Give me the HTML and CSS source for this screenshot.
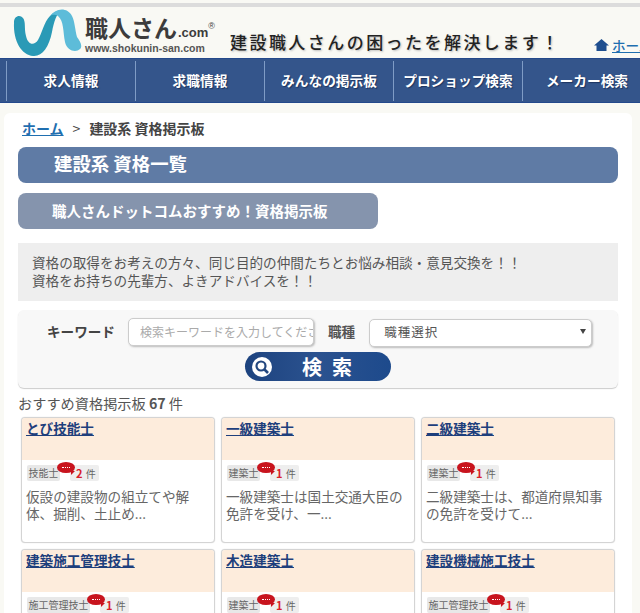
FILE: index.html
```html
<!DOCTYPE html>
<html lang="ja">
<head>
  <meta charset="UTF-8">
  <title>建設系 資格掲示板</title>
  <link rel="stylesheet" href="styles.css">
</head>
<body>
  <div class="top-line"></div>
  <header class="header">
    <svg class="logo-mark" width="70" height="50" viewBox="13 8 70 50">
      <path fill="#2a9ab6" d="M14 22C14 16 20 14 23 18C26 22 24 28 26 36C28 45 34 46 38 40C42 33 44 22 50 16C53 13 58 10 62 10C56 14 54 22 52 32C49 47 42 57 33 56C22 55 13 42 14 22Z"/>
      <path fill="#5dbcd9" d="M50 16C56 8 67 7 72 16C75 22 75 30 77 37C80 41 83 46 80 49C76 53 67 51 65 42C63 32 64 21 58 16C54 14 52 15 50 16Z"/>
    </svg>
    <div class="logo-text">
      <div class="logo-name">職人さん<span class="logo-com">.com</span><span class="logo-r">®</span></div>
      <div class="logo-url">www.shokunin-san.com</div>
    </div>
    <div class="slogan">建設職人さんの困ったを解決します！</div>
    <a class="home-link" href="#">
      <svg width="15" height="12" viewBox="0 0 15 12"><path fill="#1f4f8f" d="M7.5 0L15 6.5H12.5V12H2.5V6.5H0Z"/></svg>
      <span>ホーム</span>
    </a>
  </header>
  <nav class="nav">
    <a href="#">求人情報</a>
    <a href="#">求職情報</a>
    <a href="#">みんなの掲示板</a>
    <a href="#">プロショップ検索</a>
    <a href="#">メーカー検索</a>
  </nav>
  <main class="panel">
    <div class="crumb"><a href="#">ホーム</a><span class="crumb-sep">&gt;</span>建設系 資格掲示板</div>
    <h1 class="title-bar">建設系 資格一覧</h1>
    <h2 class="sub-bar">職人さんドットコムおすすめ！資格掲示板</h2>
    <p class="note">資格の取得をお考えの方々、同じ目的の仲間たちとお悩み相談・意見交換を！！<br>資格をお持ちの先輩方、よきアドバイスを！！</p>
    <form class="search">
      <div class="search-row">
        <label class="kw-label" for="kw">キーワード</label>
        <input class="kw-input" type="text" id="kw" placeholder="検索キーワードを入力してください">
        <label class="job-label" for="job">職種</label>
        <div class="job-wrap">
          <select class="job-select" id="job"><option>職種選択</option></select>
          <span class="job-arrow"></span>
        </div>
      </div>
      <button class="search-btn" type="button">
        <svg class="search-icon" width="22" height="22" viewBox="0 0 22 22">
          <circle cx="11" cy="11" r="10" fill="#fff"/>
          <circle cx="10" cy="10" r="4.5" fill="none" stroke="#23477f" stroke-width="2.2"/>
          <path d="M13.5 13.5L17 17" stroke="#23477f" stroke-width="2.6"/>
        </svg>
        <span>検 索</span>
      </button>
    </form>
    <div class="count">おすすめ資格掲示板 <b>67</b> 件</div>
    <div class="cards">
      <article class="card">
        <div class="card-head"><a href="#">とび技能士</a></div>
        <div class="tags"><span class="tag">技能士</span><span class="bubble"></span><span class="tag tag-num"><b>2</b> 件</span></div>
        <p class="desc">仮設の建設物の組立てや解体、掘削、土止め...</p>
      </article>
      <article class="card">
        <div class="card-head"><a href="#">一級建築士</a></div>
        <div class="tags"><span class="tag">建築士</span><span class="bubble"></span><span class="tag tag-num"><b>1</b> 件</span></div>
        <p class="desc">一級建築士は国土交通大臣の免許を受け、一...</p>
      </article>
      <article class="card">
        <div class="card-head"><a href="#">二級建築士</a></div>
        <div class="tags"><span class="tag">建築士</span><span class="bubble"></span><span class="tag tag-num"><b>1</b> 件</span></div>
        <p class="desc">二級建築士は、都道府県知事の免許を受けて...</p>
      </article>
      <article class="card">
        <div class="card-head"><a href="#">建築施工管理技士</a></div>
        <div class="tags"><span class="tag">施工管理技士</span><span class="bubble"></span><span class="tag tag-num"><b>1</b> 件</span></div>
      </article>
      <article class="card">
        <div class="card-head"><a href="#">木造建築士</a></div>
        <div class="tags"><span class="tag">建築士</span><span class="bubble"></span><span class="tag tag-num"><b>1</b> 件</span></div>
      </article>
      <article class="card">
        <div class="card-head"><a href="#">建設機械施工技士</a></div>
        <div class="tags"><span class="tag">施工管理技士</span><span class="bubble"></span><span class="tag tag-num"><b>1</b> 件</span></div>
      </article>
    </div>
  </main>
</body>
</html>
```

FILE: styles.css
```css
html {
  overflow: hidden;
}
body {
  margin: 0;
  height: 613px;
  overflow: hidden;
  background: #f9f9f4;
  font-family: "Noto Sans CJK JP", "Noto Sans", sans-serif;
  color: #555;
}
.top-line {
  height: 4px;
  margin-top: 3px;
  background: #dcdcdc;
}
.header {
  display: flex;
  height: 51px;
  overflow: hidden;
  background: #f9f9f4;
  white-space: nowrap;
}
.logo-mark {
  flex: none;
  margin: 1px 0 0 13px;
}
.logo-text {
  flex: none;
  width: 145px;
  margin-left: 2px;
}
.logo-name {
  margin-top: 6px;
  height: 28px;
  font-size: 23px;
  line-height: 28px;
  font-weight: 700;
  color: #3c3c3c;
}
.logo-com {
  margin-left: 1px;
  font-family: "Liberation Sans", sans-serif;
  font-size: 13px;
}
.logo-r {
  position: relative;
  top: -8px;
  font-family: "Liberation Sans", sans-serif;
  font-size: 9px;
  font-weight: 400;
}
.logo-url {
  margin-top: 1px;
  font-family: "Liberation Sans", sans-serif;
  font-size: 10.5px;
  line-height: 12px;
  font-weight: 700;
  color: #555;
}
.slogan {
  flex: none;
  width: 364px;
  margin-top: 23px;
  font-size: 17px;
  line-height: 24px;
  font-weight: 500;
  letter-spacing: 2.45px;
  color: #222;
  text-shadow: 1px 1px 2px #bbb;
}
.home-link {
  flex: none;
  display: flex;
  align-items: center;
  gap: 3px;
  height: 20px;
  margin-top: 28px;
  font-size: 13.6px;
  font-weight: 500;
  color: #1f6fb0;
}
.nav {
  display: flex;
  box-sizing: border-box;
  height: 45px;
  padding: 2px 0 1px 6px;
  background: #34558b;
  border-top: 1px solid #24498b;
  border-bottom: 1px solid #24498b;
}
.nav a {
  flex: none;
  width: 129px;
  border-left: 1px solid #7f9cc6;
  box-sizing: border-box;
  text-align: center;
  font-size: 13.7px;
  line-height: 39px;
  font-weight: 700;
  color: #fff;
  text-decoration: none;
  text-shadow: 1px 1px 1px #1d3560;
}
.panel {
  box-sizing: border-box;
  width: 628px;
  height: 500px;
  margin: 10px 0 0 4px;
  padding: 4px 14px 0;
  background: #fff;
  border-radius: 6px 6px 0 0;
}
.crumb {
  height: 30px;
  padding-left: 4px;
  font-size: 14px;
  line-height: 22px;
  font-weight: 700;
  color: #444;
}
.crumb a {
  color: #1f6fb0;
}
.crumb-sep {
  margin: 0 9px;
  font-weight: 400;
}
.title-bar {
  box-sizing: border-box;
  width: 600px;
  height: 36px;
  margin: 0;
  padding-left: 36px;
  background: #5f7ba5;
  border-radius: 8px;
  font-size: 18.4px;
  line-height: 32px;
  font-weight: 700;
  color: #fff;
}
.sub-bar {
  box-sizing: border-box;
  width: 360px;
  height: 36px;
  margin: 10px 0 0;
  padding-left: 34px;
  background: #8594ad;
  border-radius: 8px;
  font-size: 14.5px;
  line-height: 35px;
  font-weight: 700;
  color: #fff;
}
.note {
  box-sizing: border-box;
  width: 600px;
  height: 58px;
  margin: 14px 0 0;
  padding: 10px 14px;
  background: #eee;
  font-size: 13.6px;
  line-height: 18px;
  color: #555;
}
.search {
  box-sizing: border-box;
  width: 600px;
  height: 78px;
  margin: 9px 0 0;
  padding-top: 8px;
  background: #f8f8f8;
  border-radius: 6px;
  box-shadow: 0 1px 1px #ccc;
}
.search-row {
  display: flex;
  align-items: center;
  height: 28px;
}
.kw-label {
  width: 68px;
  margin: -3px 13px 0 29px;
  font-size: 13.6px;
  font-weight: 700;
  color: #444;
  white-space: nowrap;
}
.kw-input,
.job-select {
  box-sizing: border-box;
  height: 28px;
  margin: 0;
  background: #fff;
  border: 1px solid #ccc;
  border-radius: 5px;
  box-shadow: 1px 1px 2px #bbb;
  font-family: inherit;
  outline: none;
}
.kw-input {
  width: 186px;
  padding: 0 0 2px 11px;
  font-size: 12px;
}
.kw-input::placeholder {
  color: #aaa;
}
.job-label {
  margin: -3px 14px 0;
  font-size: 13.6px;
  font-weight: 700;
  color: #555;
}
.job-wrap {
  position: relative;
  width: 223px;
  height: 28px;
}
.job-select {
  width: 100%;
  padding: 0 0 2px 14px;
  appearance: none;
  font-size: 12.5px;
  letter-spacing: 1px;
  color: #555;
}
.job-arrow {
  position: absolute;
  top: 11px;
  right: 6px;
  border-left: 3px solid transparent;
  border-right: 3px solid transparent;
  border-top: 5px solid #444;
}
.search-btn {
  display: flex;
  align-items: center;
  box-sizing: border-box;
  width: 146px;
  height: 29px;
  margin: 6px 0 0 227px;
  padding: 0 0 0 6px;
  background: linear-gradient(90deg, #1d437f, #2b528f 50%, #1d4a8c);
  border: none;
  border-radius: 15px;
  font-family: inherit;
  font-size: 20px;
  font-weight: 700;
  color: #fff;
  white-space: nowrap;
}
.search-icon {
  flex: none;
}
.search-btn span {
  margin-left: 29px;
  letter-spacing: 2.7px;
}
.count {
  height: 22px;
  margin-top: 5px;
  font-size: 14.2px;
  line-height: 20px;
  color: #555;
}
.cards {
  display: grid;
  grid-template-columns: repeat(3, 194px);
  grid-auto-rows: 126px;
  gap: 6px;
  margin: 2px 0 0 3px;
}
.card {
  box-sizing: border-box;
  background: #fff;
  border: 1px solid #d4d4d4;
  border-radius: 4px;
  box-shadow: 0 0 1px #ccc;
}
.card-head {
  height: 42px;
  padding: 0 4px;
  background: #fdecdc;
  border-radius: 3px 3px 0 0;
  font-size: 13.6px;
  line-height: 21px;
  font-weight: 700;
}
.card-head a {
  color: #1e3f7c;
}
.tags {
  position: relative;
  display: flex;
  gap: 10px;
  height: 16px;
  margin: 5px 0 0 5px;
}
.tag {
  padding: 0 1.5px;
  background: #e8e8e8;
  border-radius: 2px;
  font-size: 10px;
  line-height: 16px;
  color: #666;
}
.tag-num {
  padding: 0 3px 0 6px;
  background: #eee;
}
.tag-num b {
  margin-right: 1px;
  font-size: 11px;
  color: #d8202a;
}
.bubble {
  position: relative;
  width: 18px;
  height: 11px;
  margin: -3px -15px 0 -13px;
  background: #c8141e;
  border-radius: 50%;
  z-index: 1;
}
.bubble::before {
  content: "";
  position: absolute;
  top: 5px;
  left: 5px;
  width: 8px;
  border-top: 1px dotted #fff;
}
.bubble::after {
  content: "";
  position: absolute;
  right: 0;
  bottom: -2px;
  border-top: 4px solid #c8141e;
  border-right: 4px solid transparent;
}
.desc {
  margin: 7px 4px 0;
  font-size: 13.6px;
  line-height: 17px;
  color: #666;
}
```
